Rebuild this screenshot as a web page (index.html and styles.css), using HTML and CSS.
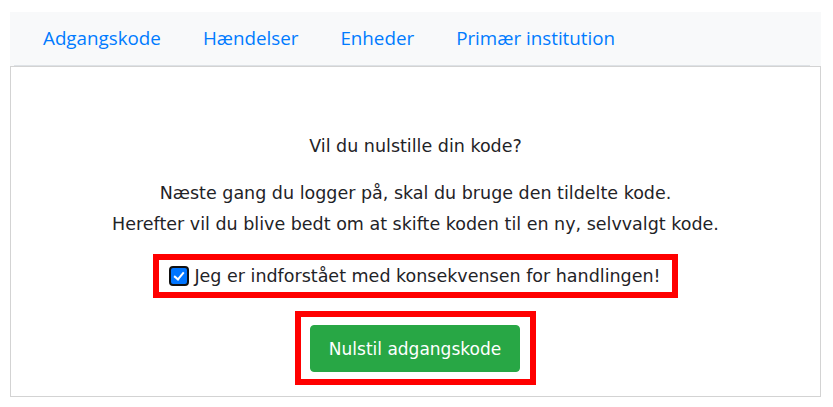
FILE: index.html
```html
<!DOCTYPE html>
<html lang="da">
<head>
<meta charset="utf-8">
<title>Nulstil adgangskode</title>
<link rel="stylesheet" href="styles.css">
</head>
<body>
<div class="page">
  <nav class="nav">
    <ul class="tabs">
      <li><a href="#">Adgangskode</a></li>
      <li><a href="#">Hændelser</a></li>
      <li><a href="#">Enheder</a></li>
      <li><a href="#">Primær institution</a></li>
    </ul>
  </nav>
  <section class="panel">
    <p class="question">Vil du nulstille din kode?</p>
    <p class="info">Næste gang du logger på, skal du bruge den tildelte kode.<br>Herefter vil du blive bedt om at skifte koden til en ny, selvvalgt kode.</p>
    <div class="confirm">
      <label class="check"><input type="checkbox" checked><span>Jeg er indforstået med konsekvensen for handlingen!</span></label>
    </div>
    <div class="action">
      <button class="btn">Nulstil adgangskode</button>
    </div>
  </section>
</div>
</body>
</html>
```
FILE: styles.css
```css
html, body {
  margin: 0;
  padding: 0;
  background: #fff;
}
body {
  font-family: "DejaVu Sans", Verdana, sans-serif;
  color: #1f2327;
}
.page {
  padding: 12px 12px 0 10px;
  width: 811px;
}
.nav {
  background: #f8f9fa;
  height: 54px;
  display: flex;
  flex-direction: column;
  justify-content: flex-end;
  padding: 0 11px 0 4px;
}
.tabs {
  list-style: none;
  margin: 0;
  padding: 0 0 0 29px;
  display: flex;
  height: 53px;
  border-bottom: 1px solid #dee2e6;
  align-items: center;
}
.tabs li a {
  display: block;
  padding: 0 21px 1px 21px;
  font-family: "Open Sans", "Noto Sans", sans-serif;
  font-size: 18.8px;
  color: #007bff;
  text-decoration: none;
}
.tabs li:first-child a { padding-left: 0; }
.panel {
  border: 1px solid #d3d3d3;
  height: 331px;
  box-sizing: border-box;
  display: flex;
  flex-direction: column;
  align-items: center;
  padding-top: 65px;
  font-size: 17.5px;
}
.question {
  margin: 0;
  line-height: 28px;
}
.info {
  margin: 18px 0 0;
  line-height: 31px;
  text-align: center;
}
.confirm {
  margin-top: 14px;
  border: 6px solid #f00;
  padding: 3px 11px 3px 10px;
}
.check {
  display: flex;
  align-items: center;
  line-height: 26px;
}
.check input {
  appearance: none;
  -webkit-appearance: none;
  width: 20px;
  height: 20px;
  margin: 0 5px 0 0;
  box-sizing: border-box;
  border: 2px solid #111;
  border-radius: 4px;
  background: #0075ff;
  position: relative;
  flex: none;
}
.check input::after {
  content: "";
  position: absolute;
  left: 5px;
  top: 2px;
  width: 4px;
  height: 8px;
  border: solid #fff;
  border-width: 0 2.5px 2.5px 0;
  transform: rotate(40deg);
}
.action {
  margin-top: 13px;
  border: 6px solid #f00;
  padding: 8px 10px 7px 9px;
}
.btn {
  display: block;
  background: #28a745;
  color: #fff;
  border: 1px solid #28a745;
  border-radius: 4px;
  height: 47px;
  width: 210px;
  padding: 0;
  font-family: "DejaVu Sans", Verdana, sans-serif;
  font-size: 17px;
}
```
